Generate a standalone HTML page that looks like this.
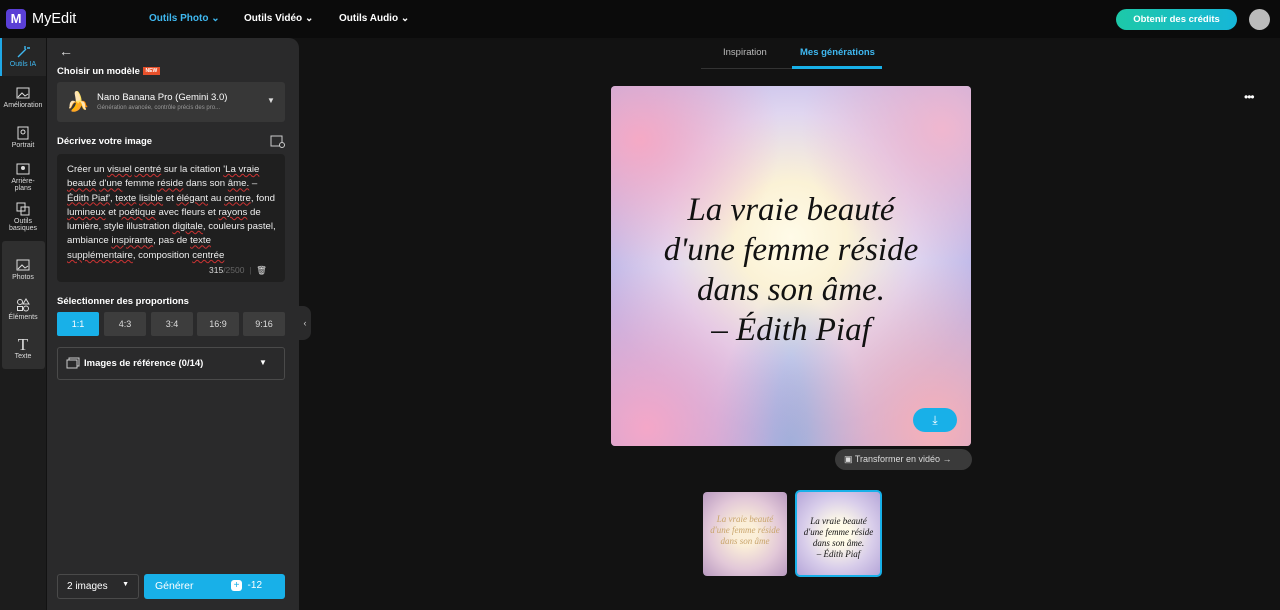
<!DOCTYPE html>
<html><head><meta charset="utf-8"><style>
*{margin:0;padding:0;box-sizing:border-box}
body{width:1280px;height:610px;background:#121212;font-family:"Liberation Sans",sans-serif;color:#fff;position:relative;overflow:hidden}
.abs{position:absolute}
.top{left:0;top:0;width:1280px;height:38px;background:#0b0b0b}
.nav{top:13px;font-size:10px;font-weight:bold}
.rail{left:0;top:38px;width:46px;height:572px;background:#1c1c1c}
.ri{position:absolute;left:0;width:46px;text-align:center;font-size:7px;color:#ddd}
.ri svg{display:block;margin:0 auto 2px}
.panel{left:47px;top:38px;width:252px;height:572px;background:#2a2a2b;border-radius:0 10px 0 0}
.h{font-size:9.5px;font-weight:bold}
.box{background:#373737;border-radius:3px}
.ta{left:57px;top:154px;width:228px;height:128px;background:#1f1f1f;border-radius:4px;padding:9px 6px 8px 10px;font-size:9.65px;line-height:14.3px;color:#eee}
.ta u{text-decoration:underline wavy #c33;text-decoration-thickness:1px}
.rb{top:312px;height:24px;width:42px;background:#3d3d3d;border-radius:2px;font-size:9px;text-align:center;line-height:24px;color:#ddd}
.img{left:611px;top:86px;width:360px;height:360px;border-radius:4px;overflow:hidden;
background:radial-gradient(circle at 50% 42%,#fffbe8 0%,#fbf2d6 20%,#e0d6f0 45%,#bcb6e8 70%,#a9a3dc 100%)}
.q{position:absolute;left:0;width:360px;text-align:center;font-family:"Liberation Serif",serif;font-style:italic;color:#111;font-size:33px;line-height:40px;top:104px}
</style></head><body>
<div class="abs top"></div>
<div class="abs" style="left:6px;top:9px;width:20px;height:20px;border-radius:4px;background:#5a3fd6;color:#fff;font-size:13px;font-weight:bold;text-align:center;line-height:20px">M</div>
<div class="abs" style="left:32px;top:11px;font-size:14.5px">MyEdit</div>
<div class="abs nav" style="left:149px;color:#3fb8f0">Outils Photo ⌄</div>
<div class="abs nav" style="left:244px">Outils Vidéo ⌄</div>
<div class="abs nav" style="left:339px">Outils Audio ⌄</div>
<div class="abs" style="left:1116px;top:9px;width:121px;height:21px;border-radius:11px;background:linear-gradient(90deg,#1dc9a8,#16b6d8);font-size:9.5px;font-weight:bold;text-align:center;line-height:21px">Obtenir des crédits</div>
<div class="abs" style="left:1249px;top:9px;width:21px;height:21px;border-radius:50%;background:#bbb"></div>

<div class="abs rail"></div>
<div class="abs" style="left:0;top:38px;width:46px;height:38px;background:#262626;border-left:2px solid #1fa8e6"></div>
<div class="ri" style="top:45px;color:#3fb8f0"><svg width="14" height="14" viewBox="0 0 14 14"><path d="M2 12L10 4M9 1v3M11 3h3" stroke="#3fb8f0" stroke-width="1.4" fill="none"/></svg>Outils IA</div>
<div class="ri" style="top:86px"><svg width="14" height="14"><rect x="1" y="2" width="12" height="10" fill="none" stroke="#ddd"/><path d="M2 11l4-4 3 3 3-2" stroke="#ddd" fill="none"/></svg>Amélioration</div>
<div class="ri" style="top:126px"><svg width="14" height="14"><rect x="2" y="1" width="10" height="12" fill="none" stroke="#ddd"/><circle cx="7" cy="6" r="2" fill="none" stroke="#ddd"/></svg>Portrait</div>
<div class="ri" style="top:162px"><svg width="14" height="14"><rect x="1" y="2" width="12" height="10" fill="none" stroke="#ddd"/><circle cx="7" cy="6" r="2" fill="#ddd"/></svg>Arrière-<br>plans</div>
<div class="ri" style="top:202px"><svg width="14" height="14"><rect x="1" y="1" width="8" height="8" fill="none" stroke="#ddd"/><rect x="5" y="5" width="8" height="8" fill="none" stroke="#ddd"/></svg>Outils<br>basiques</div>
<div class="abs" style="left:2px;top:241px;width:43px;height:128px;background:#2f2f2f;border-radius:3px"></div>
<div class="ri" style="top:258px"><svg width="14" height="14"><rect x="1" y="2" width="12" height="10" fill="none" stroke="#ddd"/><path d="M2 11l4-4 3 3 3-2" stroke="#ddd" fill="none"/></svg>Photos</div>
<div class="ri" style="top:298px"><svg width="14" height="14"><circle cx="4" cy="4" r="2.5" fill="none" stroke="#ddd"/><path d="M10 1l3 5h-6z" fill="none" stroke="#ddd"/><rect x="1.5" y="8.5" width="5" height="4" fill="none" stroke="#ddd"/><circle cx="10" cy="10.5" r="2.5" fill="none" stroke="#ddd"/></svg>Éléments</div>
<div class="ri" style="top:337px"><div style="font-family:'Liberation Serif',serif;font-size:17px;line-height:16px">T</div>Texte</div>

<div class="abs panel"></div>
<div class="abs" style="left:59px;top:43px;font-size:14px;color:#ddd">←</div>
<div class="abs h" style="left:57px;top:66px">Choisir un modèle <span style="background:#e8502a;font-size:5px;padding:1px 3px;vertical-align:2px">NEW</span></div>
<div class="abs box" style="left:57px;top:82px;width:228px;height:40px"></div>
<div class="abs" style="left:66px;top:90px;font-size:19px">🍌</div>
<div class="abs" style="left:97px;top:92px;font-size:9.5px">Nano Banana Pro (Gemini 3.0)</div>
<div class="abs" style="left:97px;top:105px;font-size:6px;color:#999">Génération avancée, contrôle précis des pro...</div>
<div class="abs" style="left:267px;top:96px;font-size:8px;color:#ddd">▼</div>
<div class="abs h" style="left:57px;top:136px">Décrivez votre image</div>
<svg class="abs" style="left:270px;top:135px" width="15" height="13"><rect x="1" y="1" width="11" height="10" fill="none" stroke="#ccc"/><circle cx="12" cy="10" r="2.5" fill="#2a2a2b" stroke="#ccc"/></svg>
<div class="abs ta">Créer un <u>visuel</u> <u>centré</u> sur la citation <u>'La vraie</u><br><u>beauté</u> <u>d'une</u> femme <u>réside</u> dans son <u>âme.</u> –<br><u>Édith Piaf'</u>, <u>texte</u> <u>lisible</u> et <u>élégant</u> au <u>centre</u>, fond<br><u>lumineux</u> et <u>poétique</u> avec fleurs et <u>rayons</u> de<br>lumière, style illustration <u>digitale</u>, couleurs pastel,<br>ambiance <u>inspirante</u>, pas de <u>texte</u><br><u>supplémentaire</u>, composition <u>centrée</u></div>
<div class="abs" style="left:209px;top:265px;font-size:8.5px;color:#ddd">315<span style="color:#666">/2500</span> <span style="color:#555">&nbsp;|&nbsp;</span> 🗑</div>
<div class="abs h" style="left:57px;top:296px">Sélectionner des proportions</div>
<div class="abs rb" style="left:57px;background:#18b0e8;color:#fff">1:1</div>
<div class="abs rb" style="left:104px">4:3</div>
<div class="abs rb" style="left:151px">3:4</div>
<div class="abs rb" style="left:197px">16:9</div>
<div class="abs rb" style="left:243px">9:16</div>
<div class="abs" style="left:299px;top:306px;width:12px;height:34px;background:#2a2a2b;border-radius:0 8px 8px 0;font-size:9px;color:#ccc;line-height:34px;text-align:center">‹</div>
<div class="abs" style="left:57px;top:347px;width:228px;height:33px;border:1px solid #4a4a4a;border-radius:3px"></div>
<svg class="abs" style="left:66px;top:357px" width="14" height="12"><rect x="3" y="1" width="10" height="8" fill="none" stroke="#ccc"/><rect x="1" y="3" width="10" height="8" fill="#2a2a2b" stroke="#ccc"/></svg>
<div class="abs h" style="left:84px;top:358px">Images de référence (0/14)</div>
<div class="abs" style="left:259px;top:358px;font-size:8px">▼</div>
<div class="abs" style="left:57px;top:574px;width:82px;height:25px;border:1px solid #4a4a4a;border-radius:3px;font-size:10px;padding:6px 9px">2 images <span style="float:right;font-size:7px">▼</span></div>
<div class="abs" style="left:144px;top:574px;width:141px;height:25px;background:#18b0e8;border-radius:3px;font-size:10.5px;padding:6px 11px">Générer <span style="position:absolute;left:87px;top:6px;font-size:10px"><span style="display:inline-block;width:11px;height:11px;border-radius:3px;background:#fff;color:#18b0e8;font-size:10px;line-height:11px;text-align:center">+</span>&nbsp; -12</span></div>

<div class="abs" style="left:701px;top:68px;width:180px;height:1px;background:#333"></div>
<div class="abs" style="left:723px;top:47px;font-size:9.5px;color:#bbb">Inspiration</div>
<div class="abs" style="left:800px;top:47px;font-size:9.5px;color:#3fb8f0;font-weight:bold">Mes générations</div>
<div class="abs" style="left:792px;top:66px;width:90px;height:3px;background:#18b0e8"></div>
<div class="abs" style="left:1244px;top:90px;font-size:12px;letter-spacing:-1px">•••</div>

<div class="abs img">
<div style="position:absolute;inset:0;background:radial-gradient(ellipse at 10% 95%,#f4a7c8 0%,transparent 35%),radial-gradient(ellipse at 90% 95%,#f7b0b8 0%,transparent 35%),radial-gradient(ellipse at 8% 15%,#f5a9c5 0%,transparent 30%),radial-gradient(ellipse at 92% 12%,#f0b7cf 0%,transparent 30%),radial-gradient(ellipse at 50% 100%,#8fb0e0 0%,transparent 30%)"></div>
<div class="q">La vraie beauté<br>d'une femme réside<br>dans son âme.<br>– Édith Piaf</div>
<div style="position:absolute;left:302px;top:322px;width:44px;height:24px;border-radius:12px;background:#18b0e8;text-align:center;color:#fff;font-size:12px;line-height:24px">⤓</div>
</div>
<div class="abs" style="left:835px;top:449px;width:137px;height:21px;border-radius:11px;background:#3a3a3a;font-size:9px;color:#ddd;line-height:21px;padding-left:9px">▣ Transformer en vidéo →</div>
<div class="abs" style="left:703px;top:492px;width:84px;height:84px;border-radius:4px;background:radial-gradient(circle,#fbefd8 20%,#e2c8d8 60%,#b99ac0);font-family:'Liberation Serif',serif;font-style:italic;color:#c9a56c;font-size:9px;text-align:center;padding-top:22px;line-height:11px">La vraie beauté<br>d'une femme réside<br>dans son âme</div>
<div class="abs" style="left:795px;top:490px;width:87px;height:87px;border-radius:5px;border:2px solid #18b0e8;background:radial-gradient(circle,#fffbe8 20%,#d8cdea 60%,#b5a6d9);font-family:'Liberation Serif',serif;font-style:italic;color:#111;font-size:9px;text-align:center;padding-top:24px;line-height:11px">La vraie beauté<br>d'une femme réside<br>dans son âme.<br>– Édith Piaf</div>
</body></html>
